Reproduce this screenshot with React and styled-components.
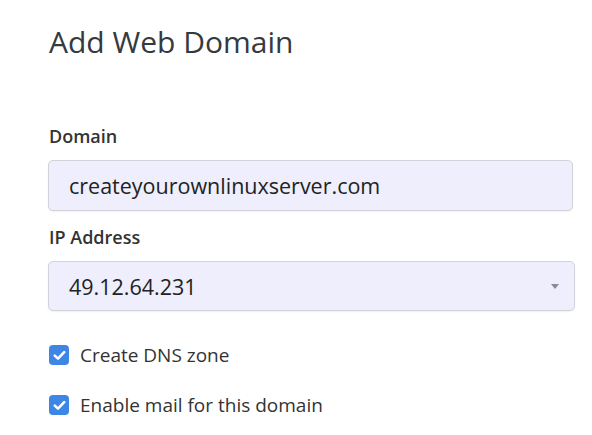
import React from "react";
import styled, { createGlobalStyle } from "styled-components";

const Global = createGlobalStyle`
  body {
    margin: 0;
    background: #ffffff;
    font-family: 'Open Sans', 'Noto Sans', sans-serif;
    color: #333333;
  }
`;

const Page = styled.div`
  width: 592px;
  height: 435px;
  padding: 0 17px 0 48px;
  box-sizing: border-box;
  overflow: hidden;
`;

const Title = styled.h1`
  margin: 0;
  padding-top: 23px;
  font-size: 30px;
  font-weight: 400;
  line-height: 38px;
  color: #343a40;
  padding-left: 1px;
`;

const Form = styled.form`
  display: flex;
  flex-direction: column;
  margin-top: 62px;
`;

const Field = styled.div`
  display: flex;
  flex-direction: column;
  margin-bottom: 13px;
`;

const Label = styled.label`
  font-size: 18px;
  font-weight: 600;
  line-height: 26px;
  color: #333333;
  margin-bottom: 11px;
  padding-left: 1px;
`;

const Input = styled.input`
  width: 525px;
  height: 51px;
  box-sizing: border-box;
  border: 1px solid #d2d2da;
  border-radius: 5px;
  background: #eeeefc;
  box-shadow: 0 1px 2px rgba(0, 0, 0, 0.06);
  padding: 0 20px;
  font-family: inherit;
  font-size: 21.5px;
  color: #222222;
  outline: none;
`;

const SelectWrap = styled.div`
  position: relative;
  width: 527px;
`;

const Select = styled.div`
  height: 50px;
  box-sizing: border-box;
  border: 1px solid #d2d2da;
  border-radius: 5px;
  background: #eeeefc;
  box-shadow: 0 1px 2px rgba(0, 0, 0, 0.06);
  padding: 0 20px;
  display: flex;
  align-items: center;
  font-size: 21.5px;
  color: #222222;
`;

const Caret = styled.span`
  position: absolute;
  right: 16px;
  top: 23px;
  width: 0;
  height: 0;
  border-left: 4px solid transparent;
  border-right: 4px solid transparent;
  border-top: 5px solid #8a8a90;
`;

const Checks = styled.div`
  display: flex;
  flex-direction: column;
  gap: 30px;
  margin-top: 21px;
  padding-left: 1px;
`;

const CheckRow = styled.label`
  display: flex;
  align-items: center;
  gap: 11px;
  font-size: 19px;
  font-weight: 500;
  color: #333333;
  line-height: 20px;
`;

const Box = styled.span`
  width: 20px;
  height: 20px;
  border-radius: 4px;
  background: #3d86e4;
  display: flex;
  align-items: center;
  justify-content: center;
  flex-shrink: 0;
`;

function Check({ children }) {
  return (
    <CheckRow>
      <Box>
        <svg width="13" height="11" viewBox="0 0 13 11">
          <path d="M1.8 5.6 L5 8.6 L11.2 2.2" fill="none" stroke="#fff" strokeWidth="2.6" strokeLinecap="round" strokeLinejoin="round" />
        </svg>
      </Box>
      {children}
    </CheckRow>
  );
}

export default function App() {
  return (
    <>
      <Global />
      <Page>
        <Title>Add Web Domain</Title>
        <Form>
          <Field>
            <Label htmlFor="domain">Domain</Label>
            <Input id="domain" type="text" defaultValue="createyourownlinuxserver.com" />
          </Field>
          <Field>
            <Label>IP Address</Label>
            <SelectWrap>
              <Select>49.12.64.231</Select>
              <Caret />
            </SelectWrap>
          </Field>
          <Checks>
            <Check>Create DNS zone</Check>
            <Check>Enable mail for this domain</Check>
          </Checks>
        </Form>
      </Page>
    </>
  );
}
